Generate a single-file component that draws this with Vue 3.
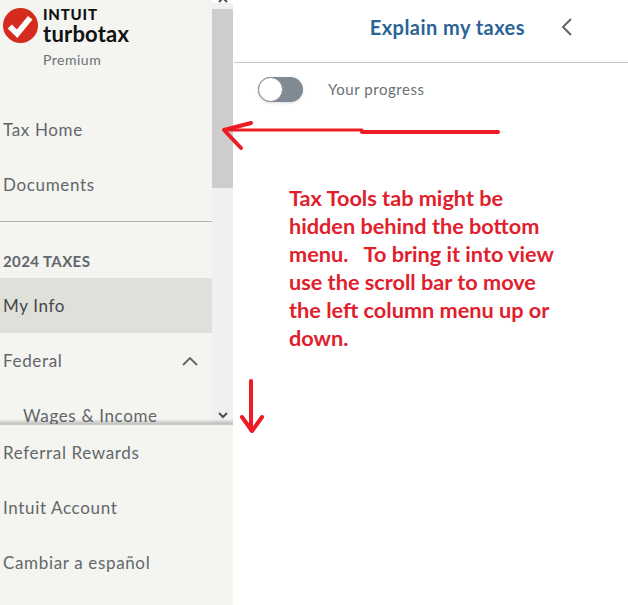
<script setup>
const topLinks = ["Tax Home", "Documents"];
const bottomLinks = ["Referral Rewards", "Intuit Account", "Cambiar a español"];
const noteLines = [
  "Tax Tools tab might be",
  "hidden behind the bottom",
  "menu.   To bring it into view",
  "use the scroll bar to move",
  "the left column menu up or",
  "down.",
];
</script>

<template>
  <div class="page">
    <aside class="sidebar">
      <div class="sidebar-top">
        <nav class="nav">
          <div class="brand">
            <svg class="brand-mark" width="35" height="35" viewBox="0 0 36 36">
              <circle cx="18" cy="18" r="18" fill="#d52b1e" />
              <path d="M7 19 L14.5 26.5 L28 10" fill="none" stroke="#fff" stroke-width="6" />
            </svg>
            <div class="brand-text">
              <div class="brand-intuit">INTUIT</div>
              <div class="brand-turbotax">turbotax</div>
              <div class="brand-tier">Premium</div>
            </div>
          </div>

          <a v-for="link in topLinks" :key="link" class="nav-item">{{ link }}</a>
          <div class="nav-divider"></div>
          <div class="nav-heading">2024 TAXES</div>
          <a class="nav-item active">My Info</a>
          <a class="nav-item federal">
            Federal
            <svg width="16" height="10" viewBox="0 0 16 10">
              <path d="M1 9 L8 2 L15 9" fill="none" stroke="#5f6468" stroke-width="1.8" />
            </svg>
          </a>
          <a class="nav-item sub">Wages &amp; Income</a>
        </nav>

        <div class="scrollbar">
          <div class="scroll-btn up">
            <svg width="10" height="7" viewBox="0 0 10 7">
              <path d="M1 6 L5 2 L9 6" fill="none" stroke="#505050" stroke-width="2" />
            </svg>
          </div>
          <div class="scroll-thumb"></div>
          <div class="scroll-rest"></div>
          <div class="scroll-btn down">
            <svg width="10" height="7" viewBox="0 0 10 7">
              <path d="M1 1 L5 5 L9 1" fill="none" stroke="#505050" stroke-width="2" />
            </svg>
          </div>
        </div>
      </div>

      <div class="sidebar-bottom">
        <a v-for="link in bottomLinks" :key="link" class="nav-item">{{ link }}</a>
      </div>
    </aside>

    <main class="content">
      <header class="content-header">
        <span class="explain">Explain my taxes</span>
        <svg width="12" height="18" viewBox="0 0 12 18">
          <path d="M10 1 L2 9 L10 17" fill="none" stroke="#5f6468" stroke-width="2" />
        </svg>
      </header>

      <div class="progress-row">
        <div class="toggle"><div class="toggle-knob"></div></div>
        <span class="progress-label">Your progress</span>
      </div>

      <div class="note">
        <div v-for="line in noteLines" :key="line">{{ line }}</div>
      </div>
    </main>

    <!-- hand drawn annotation arrows -->
    <svg class="annotations" width="628" height="605" viewBox="0 0 628 605">
      <g fill="none" stroke="#ed1c24" stroke-linecap="round" stroke-linejoin="round">
        <path d="M224 130 L362 130" stroke-width="3" />
        <path d="M362 132 L498 132" stroke-width="4" />
        <path d="M251 123 L224 130 L241 148" stroke-width="4" />
        <path d="M251 381 L251 430" stroke-width="4" />
        <path d="M242 417 L252 431 L262 417" stroke-width="4" />
      </g>
    </svg>
  </div>
</template>

<style>
html,
body {
  margin: 0;
  background: #fff;
}
</style>

<style scoped>
.page {
  position: relative;
  display: flex;
  width: 628px;
  height: 605px;
  overflow: hidden;
  background: #fff;
  font-family: Lato, "Liberation Sans", sans-serif;
}

.sidebar {
  display: flex;
  flex-direction: column;
  width: 233px;
  flex-shrink: 0;
  background: #f4f4f0;
}

.sidebar-top {
  display: flex;
  height: 424px;
  overflow: hidden;
}

.nav {
  width: 212px;
  flex-shrink: 0;
}

.brand {
  display: flex;
  gap: 5px;
  height: 102px;
  padding: 8px 0 0 3px;
  box-sizing: border-box;
}

.brand-mark {
  flex-shrink: 0;
}

.brand-text {
  margin-top: -1px;
  color: #111;
}

.brand-intuit {
  font-size: 15px;
  line-height: 15px;
  font-weight: 900;
  letter-spacing: 0.8px;
}

.brand-turbotax {
  font-size: 22px;
  line-height: 23px;
  font-weight: 700;
  letter-spacing: 0.2px;
}

.brand-tier {
  margin-top: 5px;
  font-size: 14px;
  line-height: 20px;
  letter-spacing: 0.5px;
  color: #6b7075;
}

.nav-item {
  display: flex;
  align-items: center;
  height: 55px;
  padding-left: 3px;
  box-sizing: border-box;
  font-size: 17px;
  letter-spacing: 0.65px;
  color: #62676b;
}

.nav-item.active {
  background: #e0e0da;
  color: #43474b;
}

.nav-item.federal {
  justify-content: space-between;
  padding-right: 14px;
}

.nav-item.sub {
  padding-left: 23px;
}

.nav-divider {
  height: 1px;
  margin-top: 9px;
  background: #adb3b8;
}

.nav-heading {
  display: flex;
  align-items: flex-end;
  height: 56px;
  padding: 0 0 9px 3px;
  box-sizing: border-box;
  font-size: 15px;
  font-weight: 700;
  line-height: 16px;
  letter-spacing: 0.4px;
  color: #62676b;
}

.scrollbar {
  display: flex;
  flex-direction: column;
  flex: 1;
  background: #f0f0f0;
}

.scroll-btn {
  display: flex;
  justify-content: center;
}

.scroll-btn.up {
  height: 9px;
  align-items: flex-end;
  background: #fff;
  margin-top: -6px;
}

.scroll-btn.down {
  height: 16px;
  padding-top: 4px;
  box-sizing: border-box;
}

.scroll-thumb {
  height: 179px;
  margin-top: 6px;
  background: #cdcdcd;
}

.scroll-rest {
  flex: 1;
}

.sidebar-bottom {
  position: relative;
  flex: 1;
  border-top: 1px solid #c8c8c4;
}

.sidebar-bottom::before {
  content: "";
  position: absolute;
  top: -6px;
  left: 0;
  right: 0;
  height: 5px;
  background: linear-gradient(rgba(0, 0, 0, 0), rgba(0, 0, 0, 0.22));
}

.content {
  flex: 1;
  min-width: 0;
}

.content-header {
  display: flex;
  align-items: center;
  justify-content: flex-end;
  gap: 36px;
  height: 63px;
  padding: 0 55px 8px 0;
  box-sizing: border-box;
  margin-left: 1px;
  border-bottom: 1px solid #bccace;
}

.explain {
  font-size: 20px;
  font-weight: 700;
  letter-spacing: 0.45px;
  color: #2a6496;
}

.progress-row {
  display: flex;
  align-items: center;
  gap: 25px;
  height: 52px;
  padding-left: 25px;
}

.toggle {
  width: 45px;
  height: 25px;
  border-radius: 13px;
  background: #7f8a92;
  box-shadow: 0 1px 3px rgba(0, 0, 0, 0.15);
}

.toggle-knob {
  width: 23px;
  height: 23px;
  border: 1px solid #8b9298;
  border-radius: 50%;
  background: #fff;
}

.progress-label {
  font-size: 15px;
  letter-spacing: 0.55px;
  color: #6b7075;
}

.note {
  margin: 69px 0 0 56px;
  font-size: 21.7px;
  font-weight: 700;
  line-height: 28px;
  white-space: pre;
  color: #e0202c;
}

.annotations {
  position: absolute;
  top: 0;
  left: 0;
  pointer-events: none;
}
</style>
